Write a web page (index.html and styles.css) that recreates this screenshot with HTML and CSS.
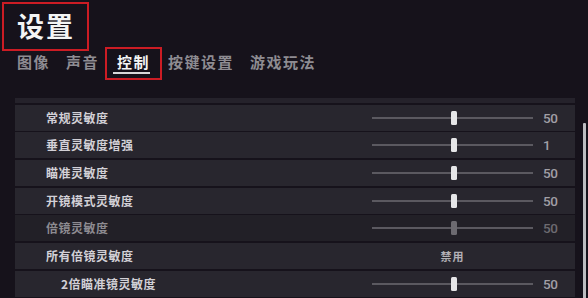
FILE: index.html
```html
<!DOCTYPE html>
<html lang="zh">
<head>
<meta charset="utf-8">
<title>设置</title>
<link rel="stylesheet" href="styles.css">
</head>
<body>
<header class="header">
  <div class="title-box"><h1 class="title">设置</h1></div>
  <nav class="tabs">
    <div class="tab"><span class="tab-label">图像</span></div>
    <div class="tab"><span class="tab-label">声音</span></div>
    <div class="tab active"><span class="tab-label">控制</span></div>
    <div class="tab"><span class="tab-label">按键设置</span></div>
    <div class="tab"><span class="tab-label">游戏玩法</span></div>
  </nav>
</header>
<main class="main">
  <section class="panel">
    <div class="panel-top"></div>
    <div class="row">
      <span class="label">常规灵敏度</span>
      <div class="slider"><span class="track"></span><span class="thumb"></span></div>
      <span class="value">50</span>
    </div>
    <div class="row">
      <span class="label">垂直灵敏度增强</span>
      <div class="slider"><span class="track"></span><span class="thumb"></span></div>
      <span class="value">1</span>
    </div>
    <div class="row">
      <span class="label">瞄准灵敏度</span>
      <div class="slider"><span class="track"></span><span class="thumb"></span></div>
      <span class="value">50</span>
    </div>
    <div class="row">
      <span class="label">开镜模式灵敏度</span>
      <div class="slider"><span class="track"></span><span class="thumb"></span></div>
      <span class="value">50</span>
    </div>
    <div class="row disabled">
      <span class="label">倍镜灵敏度</span>
      <div class="slider"><span class="track"></span><span class="thumb"></span></div>
      <span class="value">50</span>
    </div>
    <div class="row">
      <span class="label">所有倍镜灵敏度</span>
      <div class="option">禁用</div>
      <span class="value"></span>
    </div>
    <div class="row sub">
      <span class="label">2倍瞄准镜灵敏度</span>
      <div class="slider"><span class="track"></span><span class="thumb"></span></div>
      <span class="value">50</span>
    </div>
  </section>
  <div class="scrollbar"></div>
</main>
</body>
</html>
```

FILE: styles.css
```css
html, body {
  margin: 0;
  padding: 0;
  height: 100%;
}

body {
  background: #16121b;
  font-family: "Noto Sans CJK SC", "Noto Sans", sans-serif;
  color: #d6d4da;
  overflow: hidden;
}

.header {
  display: flex;
  flex-direction: column;
}

.title-box {
  box-sizing: border-box;
  width: 87px;
  height: 49px;
  margin: 2px 0 0 2px;
  border: 2px solid #cc1c24;
  display: flex;
  align-items: center;
  padding-left: 13px;
  padding-bottom: 2px;
}

.title {
  margin: 0;
  font-size: 27px;
  line-height: 30px;
  font-weight: 700;
  color: #f4f4f4;
  letter-spacing: 2px;
}

.tabs {
  display: flex;
  align-items: flex-start;
  gap: 16px;
  padding-left: 17px;
  margin-top: -4px;
}

.tab {
  display: flex;
  flex-direction: column;
  padding: 6px 0;
  color: #8e8c92;
}

.tab-label {
  font-size: 15px;
  line-height: 18px;
  font-weight: 700;
  letter-spacing: 1.5px;
  white-space: nowrap;
}

.tab::after {
  content: "";
  display: block;
  height: 2px;
  margin-top: 1px;
}

.tab.active {
  border: 2px solid #cc1c24;
  padding: 4px 10px;
  margin: 0 -10px;
  color: #f4f4f4;
}

.tab.active::after {
  background: #d8d8da;
  margin-left: -4px;
  margin-right: 0;
}

.main {
  display: flex;
  align-items: flex-start;
  padding-left: 15px;
  margin-top: 18px;
}

.panel {
  width: 560px;
  display: flex;
  flex-direction: column;
}

.panel-top {
  height: 5px;
  background: #25222b;
}

.row {
  box-sizing: border-box;
  height: 26px;
  margin-top: 1.66px;
  background: #28262e;
  display: grid;
  grid-template-columns: 316px 161px 1fr;
  column-gap: 10px;
  align-items: center;
  padding-left: 31px;
}

.label {
  font-size: 12px;
  line-height: 14px;
  font-weight: 700;
  letter-spacing: 0.5px;
  color: #d2d0d6;
  white-space: nowrap;
}

.slider {
  position: relative;
  height: 14px;
  display: flex;
  align-items: center;
}

.track {
  display: block;
  width: 100%;
  height: 2px;
  background: #5b5960;
}

.thumb {
  position: absolute;
  left: 79px;
  top: 0;
  width: 6px;
  height: 14px;
  border-radius: 1.5px;
  background: #e6e6e8;
}

.value {
  font-family: "Roboto", "Noto Sans", sans-serif;
  font-size: 13.5px;
  font-weight: 500;
  letter-spacing: -0.4px;
  color: #a19fa6;
}

.option {
  text-align: center;
  font-size: 11px;
  font-weight: 700;
  letter-spacing: 1px;
  color: #b2b0b6;
}

.row.disabled {
  background: #222027;
}

.row.disabled .label {
  color: #8d8b91;
}

.row.disabled .thumb {
  background: #6c6a70;
}

.row.disabled .value {
  color: #6d6b71;
}

.row.sub .label {
  padding-left: 15px;
}

.scrollbar {
  width: 3px;
  height: 180px;
  margin-top: 25px;
  margin-left: 8px;
  background: #bcbcc0;
  border-radius: 1px;
}
```
